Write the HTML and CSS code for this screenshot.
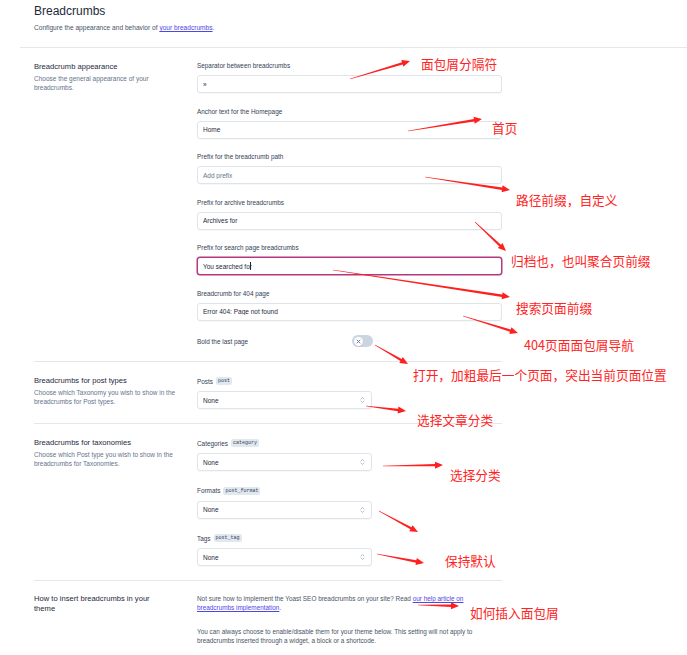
FILE: index.html
```html
<!DOCTYPE html>
<html lang="en">
<head>
    <meta charset="UTF-8">
    <meta name="viewport" content="width=device-width, initial-scale=1.0">
    <title>Breadcrumbs</title>
    <link rel="stylesheet" href="styles.css">
</head>
<body>
    <div class="page">
        <header class="page-header">
            <h1>Breadcrumbs</h1>
            <p>Configure the appearance and behavior of <a href="#">your breadcrumbs</a>.</p>
        </header>

        <section class="group">
            <div class="group-info">
                <h2>Breadcrumb appearance</h2>
                <p>Choose the general appearance of your breadcrumbs.</p>
            </div>
            <div class="group-fields">
                <div class="field">
                    <label for="sep">Separator between breadcrumbs</label>
                    <input id="sep" class="text-input" value="»">
                </div>
                <div class="field">
                    <label for="home">Anchor text for the Homepage</label>
                    <input id="home" class="text-input" value="Home">
                </div>
                <div class="field">
                    <label for="prefix">Prefix for the breadcrumb path</label>
                    <input id="prefix" class="text-input" placeholder="Add prefix">
                </div>
                <div class="field">
                    <label for="archive">Prefix for archive breadcrumbs</label>
                    <input id="archive" class="text-input" value="Archives for">
                </div>
                <div class="field">
                    <label>Prefix for search page breadcrumbs</label>
                    <div class="text-input is-focused">You searched fo<span class="caret"></span>r</div>
                </div>
                <div class="field">
                    <label for="notfound">Breadcrumb for 404 page</label>
                    <input id="notfound" class="text-input" value="Error 404: Page not found">
                </div>
                <div class="toggle-row">
                    <span>Bold the last page</span>
                    <button class="toggle" type="button">
                        <span class="toggle-knob">
                            <svg width="5" height="5" viewBox="0 0 10 10"><path d="M2 2L8 8M8 2L2 8" stroke="#64748b" stroke-width="1.8" stroke-linecap="round"/></svg>
                        </span>
                    </button>
                </div>
            </div>
        </section>

        <section class="group">
            <div class="group-info">
                <h2>Breadcrumbs for post types</h2>
                <p>Choose which Taxonomy you wish to show in the breadcrumbs for Post types.</p>
            </div>
            <div class="group-fields">
                <div class="field">
                    <div class="field-label">Posts <code class="badge">post</code></div>
                    <div class="select-wrap">
                        <select class="select"><option>None</option></select>
                        <svg class="select-icon" width="5" height="8" viewBox="0 0 10 16"><path d="M2 6l3-3 3 3M2 10l3 3 3-3" fill="none" stroke="#94a3b8" stroke-width="1.4" stroke-linecap="round" stroke-linejoin="round"/></svg>
                    </div>
                </div>
            </div>
        </section>

        <section class="group">
            <div class="group-info">
                <h2>Breadcrumbs for taxonomies</h2>
                <p>Choose which Post type you wish to show in the breadcrumbs for Taxonomies.</p>
            </div>
            <div class="group-fields">
                <div class="field">
                    <div class="field-label">Categories <code class="badge">category</code></div>
                    <div class="select-wrap">
                        <select class="select"><option>None</option></select>
                        <svg class="select-icon" width="5" height="8" viewBox="0 0 10 16"><path d="M2 6l3-3 3 3M2 10l3 3 3-3" fill="none" stroke="#94a3b8" stroke-width="1.4" stroke-linecap="round" stroke-linejoin="round"/></svg>
                    </div>
                </div>
                <div class="field">
                    <div class="field-label">Formats <code class="badge">post_format</code></div>
                    <div class="select-wrap">
                        <select class="select"><option>None</option></select>
                        <svg class="select-icon" width="5" height="8" viewBox="0 0 10 16"><path d="M2 6l3-3 3 3M2 10l3 3 3-3" fill="none" stroke="#94a3b8" stroke-width="1.4" stroke-linecap="round" stroke-linejoin="round"/></svg>
                    </div>
                </div>
                <div class="field">
                    <div class="field-label">Tags <code class="badge">post_tag</code></div>
                    <div class="select-wrap">
                        <select class="select"><option>None</option></select>
                        <svg class="select-icon" width="5" height="8" viewBox="0 0 10 16"><path d="M2 6l3-3 3 3M2 10l3 3 3-3" fill="none" stroke="#94a3b8" stroke-width="1.4" stroke-linecap="round" stroke-linejoin="round"/></svg>
                    </div>
                </div>
            </div>
        </section>

        <section class="group group-last">
            <div class="group-info">
                <h2 class="narrow">How to insert breadcrumbs in your theme</h2>
            </div>
            <div class="group-text">
                <p>Not sure how to implement the Yoast SEO breadcrumbs on your site? Read <a href="#">our help article on breadcrumbs implementation</a>.</p>
                <p>You can always choose to enable/disable them for your theme below. This setting will not apply to breadcrumbs inserted through a widget, a block or a shortcode.</p>
            </div>
        </section>

        <!-- 批注层 -->
        <div class="notes">
            <svg class="arrows" width="687" height="655" viewBox="0 0 687 655">
                <g fill="#ff1f1f">
                    <polygon points="350.1,79.3 402.7,64.5 403.3,66.7 410,61 401.3,60 402,62.2 349.9,78.7"/>
                    <polygon points="408.05,131.3 474.3,121.46 474.66,123.73 482,119 473.54,116.83 473.91,119.1 407.95,130.7"/>
                    <polygon points="424.95,177.3 501.91,189.98 501.56,192.25 510,190 502.62,185.33 502.27,187.6 425.05,176.7"/>
                    <polygon points="474.8,222.22 499.34,246.42 497.77,248.1 506,251 502.55,242.99 500.98,244.66 475.2,221.78"/>
                    <polygon points="332.95,270.3 501.91,296.98 501.56,299.25 510,297 502.62,292.33 502.27,294.6 333.05,269.7"/>
                    <polygon points="462.91,316.29 510.01,331.79 509.33,333.98 518,333 511.39,327.3 510.71,329.49 463.09,315.71"/>
                    <polygon points="374.85,345.26 400.47,361.05 399.32,363.04 408,364 402.82,356.98 401.67,358.97 375.15,344.74"/>
                    <polygon points="365.96,406.3 397.91,411.2 397.63,413.48 406,411 398.49,406.54 398.21,408.82 366.04,405.7"/>
                    <polygon points="383,466.3 435.02,466.33 435.06,468.63 443,465 434.94,461.63 434.98,463.93 383,465.7"/>
                    <polygon points="378.86,511.26 410.38,529.27 409.29,531.29 418,532 412.61,525.13 411.52,527.15 379.14,510.74"/>
                    <polygon points="376.94,554.29 415.91,562.68 415.48,564.94 424,563 416.8,558.06 416.37,560.32 377.06,553.71"/>
                    <polygon points="417.99,605.3 450.97,607 450.91,609.3 459,606 451.09,602.3 451.03,604.6 418.01,604.7"/>
                </g>
            </svg>
            <span class="note note-sep">面包屑分隔符</span>
            <span class="note note-home">首页</span>
            <span class="note note-prefix">路径前缀，自定义</span>
            <span class="note note-archive">归档也，也叫聚合页前缀</span>
            <span class="note note-search">搜索页面前缀</span>
            <span class="note note-404">404页面面包屑导航</span>
            <span class="note note-bold">打开，加粗最后一个页面，突出当前页面位置</span>
            <span class="note note-post">选择文章分类</span>
            <span class="note note-cat">选择分类</span>
            <span class="note note-default">保持默认</span>
            <span class="note note-insert">如何插入面包屑</span>
        </div>
    </div>
</body>
</html>
```

FILE: styles.css
```css
:root {
    --slate-200: #e2e8f0;
    --slate-300: #cbd5e1;
    --slate-400: #94a3b8;
    --slate-500: #64748b;
    --slate-600: #475569;
    --slate-700: #334155;
    --slate-800: #1e293b;
    --border: #e5e7eb;
    --input-border: #dfe4ea;
    --primary: #b5367f;
    --link: #4f46e5;
    --note: #ff2323;
}

* {
    margin: 0;
    padding: 0;
    box-sizing: border-box;
}

body {
    font-family: "Liberation Sans", Arial, sans-serif;
    background: #fff;
    color: var(--slate-800);
}

.page {
    position: relative;
    width: 687px;
    min-height: 655px;
}

/* 页头 */
.page-header {
    margin-left: 20px;
    padding: 4px 0 15px 14px;
    border-bottom: 1px solid var(--border);
}

.page-header h1 {
    font-size: 12px;
    line-height: 14px;
    font-weight: 400;
    color: var(--slate-800);
}

.page-header p {
    margin-top: 5px;
    font-size: 6.6px;
    line-height: 9px;
    color: var(--slate-600);
}

a {
    color: var(--link);
}

/* 分组 */
.group {
    display: grid;
    grid-template-columns: 142px 305px;
    column-gap: 21px;
    width: 468px;
    margin-left: 34px;
    padding: 14px 0;
    border-bottom: 1px solid var(--border);
}

.group-last {
    padding-top: 13px;
    border-bottom: none;
}

.group-info h2 {
    font-size: 7.6px;
    line-height: 10px;
    font-weight: 400;
    color: var(--slate-800);
}

.group-info h2.narrow {
    max-width: 125px;
}

.group-info p {
    margin-top: 2px;
    font-size: 6.5px;
    line-height: 9px;
    color: var(--slate-500);
}

.group-fields {
    display: flex;
    flex-direction: column;
    gap: 14.5px;
}

.field {
    display: flex;
    flex-direction: column;
}

.field label {
    font-size: 6.4px;
    line-height: 8px;
    color: var(--slate-700);
    margin-bottom: 5px;
}

.field-label {
    display: flex;
    align-items: center;
    gap: 3px;
    height: 10px;
    margin-bottom: 5px;
    font-size: 6.4px;
    color: var(--slate-700);
}

.badge {
    font-family: "Liberation Mono", "DejaVu Sans Mono", monospace;
    font-size: 5px;
    line-height: 8px;
    padding: 0 2px;
    border-radius: 2px;
    background: var(--slate-200);
    color: var(--slate-700);
}

.text-input {
    display: flex;
    align-items: center;
    width: 305px;
    height: 18px;
    padding: 0 5px;
    border: 1px solid var(--input-border);
    border-radius: 3px;
    background: #fff;
    font-family: inherit;
    font-size: 6.5px;
    color: var(--slate-800);
    box-shadow: 0 1px 1px rgba(0, 0, 0, 0.03);
    outline: none;
}

.text-input::placeholder {
    color: var(--slate-500);
}

.text-input.is-focused {
    border-color: var(--primary);
    box-shadow: 0 0 0 0.5px var(--primary);
}

.caret {
    display: inline-block;
    width: 0.6px;
    height: 8px;
    background: var(--slate-800);
    margin-right: -0.6px;
}

/* 开关 */
.toggle-row {
    display: flex;
    align-items: center;
    justify-content: space-between;
    width: 176px;
    height: 12px;
    font-size: 6.4px;
    color: var(--slate-700);
}

.toggle {
    display: flex;
    align-items: center;
    width: 21px;
    height: 12px;
    padding: 0 1.5px;
    border: none;
    border-radius: 6px;
    background: var(--slate-300);
}

.toggle-knob {
    display: flex;
    align-items: center;
    justify-content: center;
    width: 9px;
    height: 9px;
    border-radius: 50%;
    background: #fff;
    box-shadow: 0 0.5px 1px rgba(0, 0, 0, 0.15);
}

/* 下拉框 */
.select-wrap {
    position: relative;
    width: 175px;
    height: 18px;
}

.select {
    display: block;
    appearance: none;
    -webkit-appearance: none;
    width: 100%;
    height: 18px;
    padding: 0 14px 0 5px;
    border: 1px solid var(--input-border);
    border-radius: 3px;
    background: #fff;
    font-family: inherit;
    font-size: 6.5px;
    color: var(--slate-800);
    box-shadow: 0 1px 1px rgba(0, 0, 0, 0.03);
}

.select-icon {
    position: absolute;
    top: 5px;
    right: 7px;
}

.group-text p {
    font-size: 6.4px;
    line-height: 9.3px;
    color: var(--slate-600);
}

.group-text p + p {
    margin-top: 14.5px;
}

/* 批注 */
.notes {
    position: absolute;
    top: 0;
    left: 0;
    width: 687px;
    height: 655px;
    pointer-events: none;
}

.arrows {
    position: absolute;
    top: 0;
    left: 0;
}

.note {
    position: absolute;
    font-family: "Noto Sans CJK SC", sans-serif;
    font-size: 12.7px;
    line-height: 13px;
    color: var(--note);
    white-space: nowrap;
}

.note-sep { left: 421px; top: 56.5px; }
.note-home { left: 492px; top: 120.5px; }
.note-prefix { left: 516px; top: 192.5px; }
.note-archive { left: 511px; top: 253.5px; }
.note-search { left: 516px; top: 300.5px; }
.note-404 { left: 524px; top: 337.5px; }
.note-bold { left: 413px; top: 367.5px; }
.note-post { left: 417px; top: 412.5px; }
.note-cat { left: 450px; top: 467.5px; }
.note-default { left: 445px; top: 553.5px; }
.note-insert { left: 470px; top: 605.5px; }
```
